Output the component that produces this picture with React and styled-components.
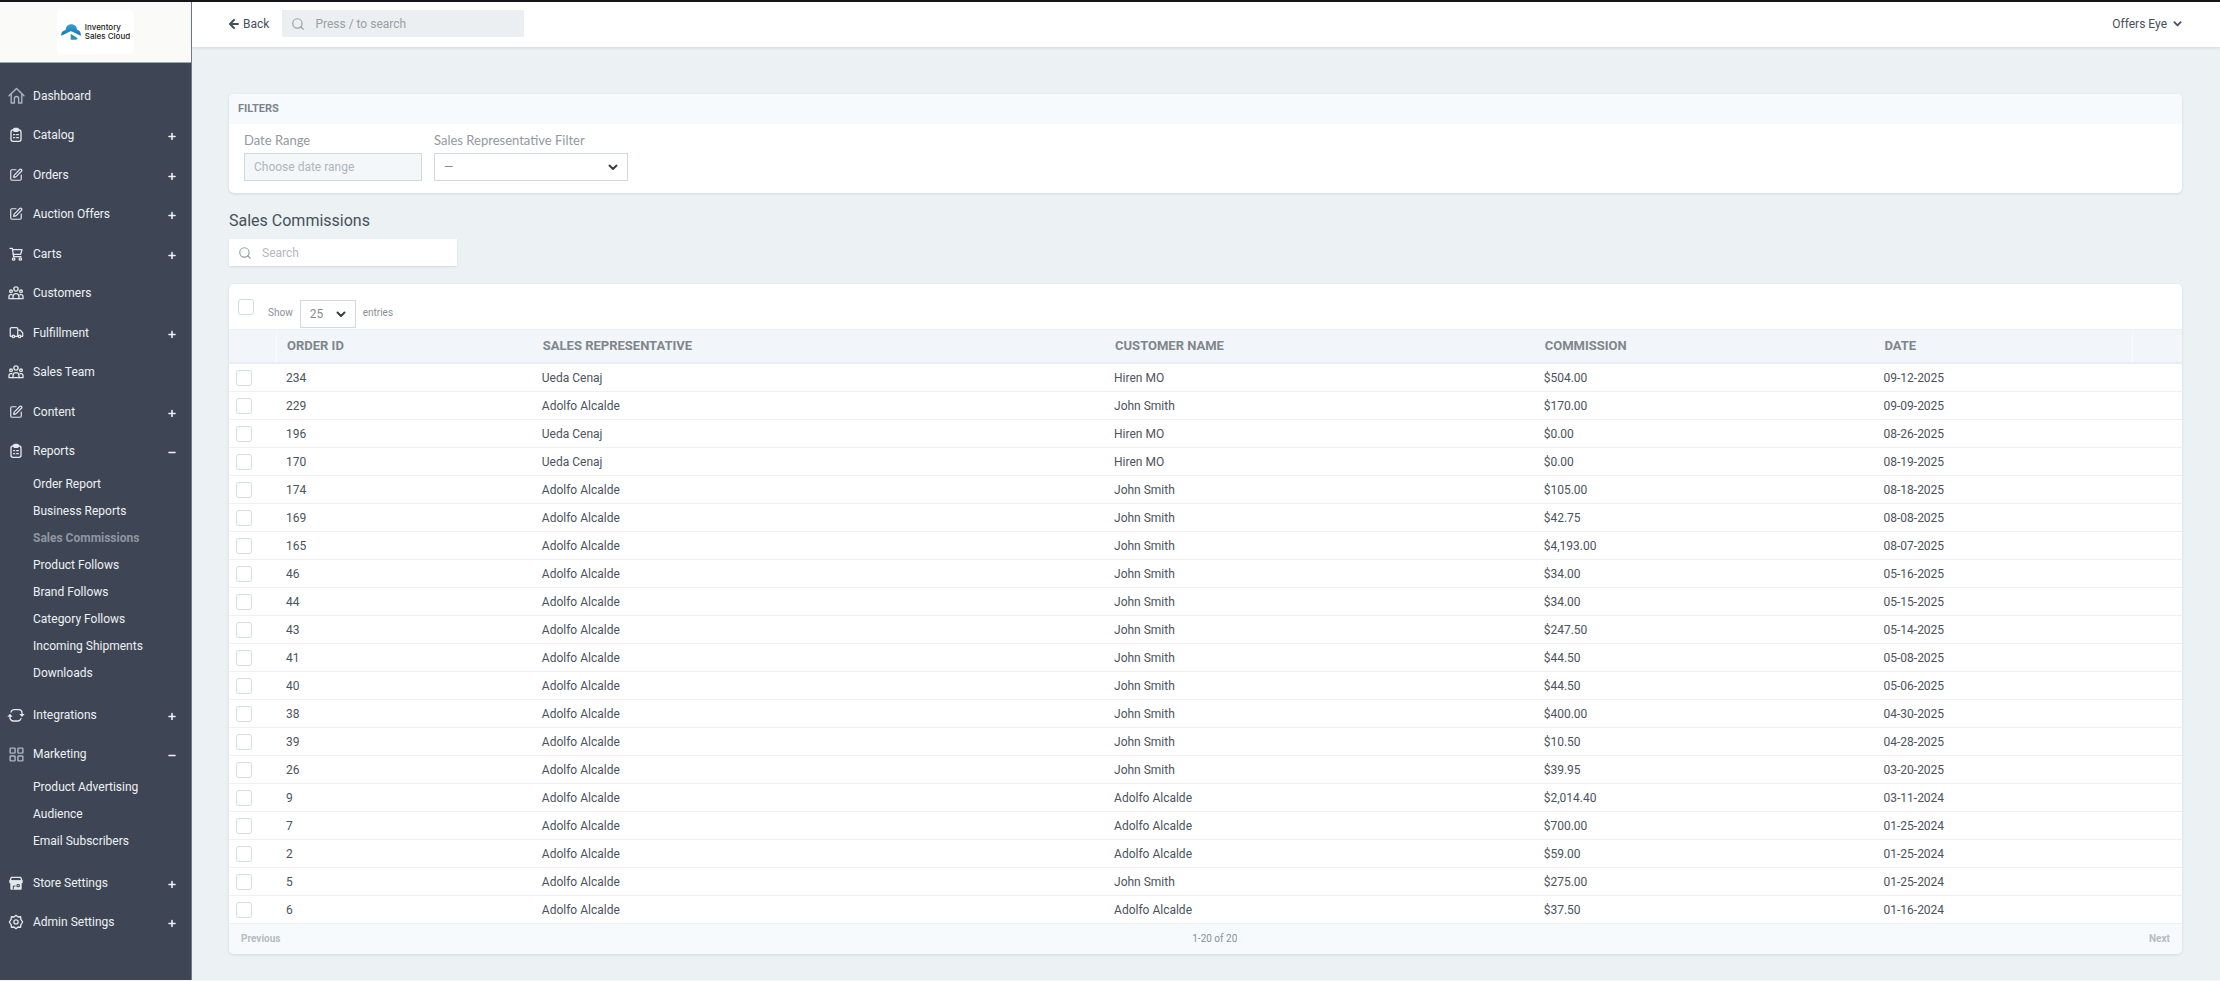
import React, { useState } from 'react';
import styled, { createGlobalStyle } from 'styled-components';
import { SquarePen, LayoutGrid, Search, Truck, ShoppingCart } from 'lucide-react';

const FONT = 'Roboto, "Liberation Sans", sans-serif';
const SIDEBAR = '#3e4655';
const PAGE_BG = '#ecf1f4';
const TEXT_DARK = '#46505c';
const TEXT_MUTED = '#8a9096';
const BORDER = '#d0dae0';

const GlobalStyle = createGlobalStyle`
  * {
    box-sizing: border-box;
  }
  body {
    margin: 0;
    background: #f1f6f9;
    color: ${TEXT_DARK};
    font-family: ${FONT};
    font-size: 12px;
  }
  input, select, button {
    font-family: ${FONT};
    font-size: 12px;
  }
`;

const Shell = styled.div`
  display: flex;
  height: calc(100vh - 1px);
  border-top: 2px solid #15151a;
  overflow: hidden;
`;

const Sidebar = styled.aside`
  flex: none;
  display: flex;
  flex-direction: column;
  width: 192px;
  background: ${SIDEBAR};
  border-right: 1px solid #707985;
`;

const Brand = styled.a`
  flex: none;
  display: flex;
  align-items: center;
  justify-content: center;
  height: 61px;
  background: #fafaf8;
  border-bottom: 1px solid #9aa9ae;
  text-decoration: none;
`;

const BrandCard = styled.span`
  display: flex;
  align-items: center;
  gap: 4px;
  padding: 0 4px;
  height: 44px;
  border-radius: 4px;
  background: #fff;
  color: #1b1d21;
  font-family: Inter, sans-serif;
  font-size: 8px;
  font-weight: 500;
  line-height: 9px;
`;

const NavList = styled.ul`
  margin: 0;
  padding: 13px 0 0;
  list-style: none;
`;

const NavGroup = styled.li`
  padding-bottom: ${p => (p.$open ? '8px' : '0')};
  &:nth-child(even) > button {
    height: 40px;
  }
`;

const NavButton = styled.button`
  display: flex;
  align-items: center;
  width: 100%;
  height: 39px;
  padding: 0 15px 0 8px;
  border: 0;
  background: none;
  color: #eef1f4;
  text-align: left;
  cursor: pointer;
`;

const NavIcon = styled.span`
  display: flex;
  align-items: center;
  justify-content: center;
  width: 16px;
  height: 18px;
  margin-right: 9px;
  color: ${p => (p.$soft ? '#a9b6c6' : '#e3e8ed')};
  svg {
    flex: none;
  }
`;

const NavText = styled.span`
  flex: 1;
`;

const SubList = styled.ul`
  margin: 0;
  padding: 0;
  list-style: none;
`;

const SubLink = styled.a`
  display: block;
  padding-left: 33px;
  line-height: 27px;
  text-decoration: none;
  color: ${p => (p.$active ? '#8f96a1' : '#eef1f4')};
  font-weight: ${p => (p.$active ? 700 : 400)};
`;

const Column = styled.div`
  flex: 1;
  min-width: 0;
  display: flex;
  flex-direction: column;
  background: ${PAGE_BG};
`;

const TopBar = styled.header`
  flex: none;
  display: flex;
  align-items: center;
  gap: 13px;
  height: 45px;
  padding: 0 38px 2px 37px;
  background: #fff;
  box-shadow: 0 1px 3px rgba(60, 80, 95, 0.16);
`;

const TextButton = styled.button`
  display: flex;
  align-items: center;
  gap: ${p => p.$gap || '4px'};
  padding: 0;
  border: 0;
  background: none;
  color: ${TEXT_DARK};
  cursor: pointer;
`;

const Spacer = styled.div`
  flex: 1;
`;

const SearchBox = styled.label`
  display: flex;
  align-items: center;
  gap: 10px;
  width: ${p => p.$width};
  height: 27px;
  padding: 0 9px;
  background: ${p => (p.$filled ? '#ebeff2' : '#fff')};
  color: #9a9fa5;
  box-shadow: ${p => (p.$filled ? 'none' : '0 1px 2px rgba(60, 80, 95, 0.12)')};
  input {
    flex: 1;
    min-width: 0;
    padding: 0;
    border: 0;
    outline: 0;
    background: none;
    color: ${TEXT_DARK};
  }
  input::placeholder {
    color: ${p => (p.$filled ? '#9a9fa5' : '#b4b8bc')};
  }
`;

const Content = styled.main`
  flex: 1;
  min-height: 0;
  overflow-y: auto;
  scrollbar-width: none;
  padding: 47px 38px 0 37px;
`;

const Card = styled.section`
  background: #fff;
  border-radius: 5px;
  box-shadow: 0 1px 3px rgba(60, 80, 95, 0.14);
  overflow: hidden;
`;

const CardTitle = styled.h2`
  margin: 0;
  padding: 0 9px;
  background: #f6fafd;
  color: #7c848b;
  font-size: 11px;
  font-weight: 700;
  line-height: 30px;
`;

const FilterRow = styled.div`
  display: flex;
  gap: 12px;
  padding: 8px 15px 12px;
`;

const Field = styled.div`
  display: flex;
  flex-direction: column;
  gap: 5px;
  width: ${p => p.$width};
  label {
    color: #93999f;
    font-family: Lato, sans-serif;
    font-size: 13px;
    line-height: 16px;
  }
`;

const DateInput = styled.input`
  width: 100%;
  height: 28px;
  padding: 0 9px;
  border: 1px solid ${BORDER};
  border-radius: 0;
  background: #f3f7fa;
  &::placeholder {
    color: #b0b6bb;
  }
`;

const SelectWrap = styled.span`
  position: relative;
  display: block;
  width: ${p => p.$width};
  svg {
    position: absolute;
    top: 9px;
    right: 10px;
    pointer-events: none;
    color: #3a3f45;
  }
`;

const SelectInput = styled.select`
  display: block;
  width: 100%;
  height: 28px;
  padding: 0 9px;
  appearance: none;
  border: 1px solid ${BORDER};
  border-radius: 0;
  background: #fff;
  color: #858b91;
`;

const PageTitle = styled.h1`
  margin: 18px 0 8px;
  font-size: 16px;
  font-weight: 400;
  line-height: 20px;
`;

const TableCard = styled(Card)`
  margin-top: 18px;
`;

const TableTools = styled.div`
  display: flex;
  align-items: flex-start;
  padding: 15px 9px 0;
  height: 45px;
`;

const Check = styled.input.attrs({ type: 'checkbox' })`
  display: block;
  appearance: none;
  width: 16px;
  height: 16px;
  margin: 0;
  border: 1px solid #d5dbdf;
  border-radius: 3px;
  background: #fff;
`;

const Entries = styled.label`
  display: flex;
  align-items: flex-start;
  gap: 7px;
  margin: 1px 0 0 14px;
  color: ${TEXT_MUTED};
  font-size: 10px;
  line-height: 26px;
`;

const Table = styled.table`
  width: 100%;
  table-layout: fixed;
  border-collapse: separate;
  border-spacing: 0;
  th {
    height: 35px;
    padding: 0 10px 2px;
    background: #f2f6fa;
    border-top: 1px solid #ecf1f4;
    border-bottom: 2px solid #e9edf0;
    color: #7f868c;
    font-size: 13px;
    font-weight: 700;
    text-align: left;
    text-transform: uppercase;
  }
  th:first-child {
    border-right: 1px solid #f7fafc;
  }
  th:last-child {
    border-left: 1px solid #f7fafc;
  }
  td {
    height: 28px;
    padding: 0 9px;
    border-bottom: 1px solid #edf1f2;
    color: #4b535c;
  }
  td:first-child {
    padding-left: 7px;
  }
`;

const Col = styled.col`
  width: ${p => p.$width};
`;

const Pager = styled.nav`
  display: flex;
  align-items: center;
  justify-content: space-between;
  height: 30px;
  padding: 0 12px 2px;
  background: #f6fafd;
  color: ${TEXT_MUTED};
  font-size: 10px;
`;

const PagerButton = styled.button`
  padding: 0;
  border: 0;
  background: none;
  color: #b6bcc0;
  && {
    font-size: 10px;
  }
  font-weight: 700;
`;

const Glyph = ({ size = 16, children, ...rest }) => (
  <svg
    width={size}
    height={size}
    viewBox="0 0 24 24"
    fill="none"
    stroke="currentColor"
    strokeWidth="2"
    strokeLinecap="round"
    strokeLinejoin="round"
    aria-hidden="true"
    {...rest}
  >
    {children}
  </svg>
);

const HomeIcon = () => (
  <Glyph size={17}>
    <path d="M1.500 12.500 12 2l10.500 10.500" />
    <path d="M4.500 10v12.500h4.500v-6a3 3 0 0 1 6 0v6h4.500V10" />
  </Glyph>
);

const ClipboardIcon = () => (
  <Glyph>
    <rect x="4.500" y="4.500" width="15" height="17" rx="3" />
    <rect x="8.500" y="2" width="7" height="4.500" rx="1.500" fill="currentColor" />
    <path d="M8.500 11.500h1.500M13 11.500h2.500M8.500 16h1.500M13 16h2.500" />
  </Glyph>
);

const CartIcon = () => (
  <Glyph>
    <path d="M3 3.500h3.500l2 12.500h11" />
    <path d="M6.800 5.500H21l-2 7H8" />
    <circle cx="8.500" cy="19.500" r="1.800" />
    <circle cx="18.500" cy="19.500" r="1.800" />
  </Glyph>
);

const PeopleIcon = () => (
  <Glyph>
    <circle cx="12" cy="6" r="3.200" />
    <circle cx="4.500" cy="9.500" r="2" />
    <circle cx="19.500" cy="9.500" r="2" />
    <path d="M7.500 20.500v-3a4.500 4.500 0 0 1 9 0v3z" />
    <path d="M6 14.500H4.500a3 3 0 0 0-3 3v3H7M18 14.500h1.500a3 3 0 0 1 3 3v3H17" />
  </Glyph>
);

const SyncIcon = () => (
  <svg
    width="18"
    height="16"
    viewBox="0 0 27 24"
    fill="none"
    stroke="currentColor"
    strokeWidth="2"
    strokeLinecap="round"
    aria-hidden="true"
  >
    <path d="M6 7.500A5 5 0 0 1 10.500 4h7A5 5 0 0 1 22.500 9v3" />
    <path d="M21 17.500a5 5 0 0 1-4.500 3.500h-7A5 5 0 0 1 4.500 16v-3" />
    <path d="M18.500 10.500h8l-4 4.500zM.500 14.500h8L4.500 10z" fill="currentColor" stroke="none" />
  </svg>
);

const StoreIcon = () => (
  <Glyph>
    <path d="M5 3.500h14l2 5.500H3z" />
    <path d="M3 9h18v2.500H3z" fill="currentColor" />
    <path d="M4.500 12v9h15v-9z" fill="currentColor" />
    <path d="M8 21v-4.500h2.500M14 14.500h3v3h-3z" stroke={SIDEBAR} strokeWidth="1.500" />
  </Glyph>
);

const GearIcon = () => (
  <Glyph>
    <path d="M12 2l3 2.500 3.900-.400.400 3.900L22 12l-2.700 4-.400 3.900-3.900-.400L12 22l-3-2.500-3.900.400-.400-3.900L2 12l2.700-4 .400-3.900 3.900.400z" />
    <circle cx="12" cy="12" r="3.200" />
  </Glyph>
);

const ToggleIcon = ({ open }) => (
  <svg width="8" height="10" viewBox="0 0 8 10" aria-hidden="true">
    <path
      d={open ? 'M1 6.500h6' : 'M1 6.500h6M4 3.500v6'}
      stroke="currentColor"
      strokeWidth="1.600"
      strokeLinecap="round"
    />
  </svg>
);

const Chevron = ({ size = 10 }) => (
  <svg width={size} height={size} viewBox="0 0 10 10" fill="none" aria-hidden="true">
    <path
      d="M1.500 3.500 5 7l3.500-3.500"
      stroke="currentColor"
      strokeWidth="2"
      strokeLinecap="round"
      strokeLinejoin="round"
    />
  </svg>
);

const BackArrow = () => (
  <svg width="10" height="10" viewBox="0 0 10 10" fill="none" aria-hidden="true">
    <path
      d="M9 5H1.500M5 1 1 5l4 4"
      stroke="currentColor"
      strokeWidth="2"
      strokeLinecap="round"
      strokeLinejoin="round"
    />
  </svg>
);

const CloudLogo = () => (
  <svg width="20" height="16" viewBox="0 0 60 48" aria-hidden="true">
    <defs>
      <linearGradient id="cloud" x1="0" y1="0" x2="0" y2="1">
        <stop offset="0" stopColor="#35a0d8" />
        <stop offset="1" stopColor="#1476b4" />
      </linearGradient>
    </defs>
    <path
      d="M1 35C-1 25 6 19 14 18 14 8 21 1 31 1s17 7 17 16c8 1 13 9 11 18L36 24q-6-4-12 0z"
      fill="url(#cloud)"
    />
    <path d="M29 29 50 43q-1 4-5 4H29z" fill="#2b93b8" />
  </svg>
);

const navItems = [
  { label: 'Dashboard', icon: <HomeIcon />, soft: true, leaf: true },
  { label: 'Catalog', icon: <ClipboardIcon /> },
  { label: 'Orders', icon: <SquarePen size={14} /> },
  { label: 'Auction Offers', icon: <SquarePen size={14} /> },
  { label: 'Carts', icon: <CartIcon /> },
  { label: 'Customers', icon: <PeopleIcon />, leaf: true },
  { label: 'Fulfillment', icon: <Truck size={15} /> },
  { label: 'Sales Team', icon: <PeopleIcon />, leaf: true },
  { label: 'Content', icon: <SquarePen size={14} /> },
  {
    label: 'Reports',
    icon: <ClipboardIcon />,
    children: [
      'Order Report',
      'Business Reports',
      'Sales Commissions',
      'Product Follows',
      'Brand Follows',
      'Category Follows',
      'Incoming Shipments',
      'Downloads',
    ],
  },
  { label: 'Integrations', icon: <SyncIcon /> },
  {
    label: 'Marketing',
    icon: <LayoutGrid size={17} />,
    soft: true,
    children: ['Product Advertising', 'Audience', 'Email Subscribers'],
  },
  { label: 'Store Settings', icon: <StoreIcon /> },
  { label: 'Admin Settings', icon: <GearIcon /> },
];

const ADOLFO = 'Adolfo Alcalde';
const UEDA = 'Ueda Cenaj';
const HIREN = 'Hiren MO';
const JOHN = 'John Smith';

const orders = [
  [234, UEDA, HIREN, '$504.00', '09-12-2025'],
  [229, ADOLFO, JOHN, '$170.00', '09-09-2025'],
  [196, UEDA, HIREN, '$0.00', '08-26-2025'],
  [170, UEDA, HIREN, '$0.00', '08-19-2025'],
  [174, ADOLFO, JOHN, '$105.00', '08-18-2025'],
  [169, ADOLFO, JOHN, '$42.75', '08-08-2025'],
  [165, ADOLFO, JOHN, '$4,193.00', '08-07-2025'],
  [46, ADOLFO, JOHN, '$34.00', '05-16-2025'],
  [44, ADOLFO, JOHN, '$34.00', '05-15-2025'],
  [43, ADOLFO, JOHN, '$247.50', '05-14-2025'],
  [41, ADOLFO, JOHN, '$44.50', '05-08-2025'],
  [40, ADOLFO, JOHN, '$44.50', '05-06-2025'],
  [38, ADOLFO, JOHN, '$400.00', '04-30-2025'],
  [39, ADOLFO, JOHN, '$10.50', '04-28-2025'],
  [26, ADOLFO, JOHN, '$39.95', '03-20-2025'],
  [9, ADOLFO, ADOLFO, '$2,014.40', '03-11-2024'],
  [7, ADOLFO, ADOLFO, '$700.00', '01-25-2024'],
  [2, ADOLFO, ADOLFO, '$59.00', '01-25-2024'],
  [5, ADOLFO, JOHN, '$275.00', '01-25-2024'],
  [6, ADOLFO, ADOLFO, '$37.50', '01-16-2024'],
];

const columns = [
  { title: 'Order ID', width: '13.1%' },
  { title: 'Sales Representative', width: '29.3%' },
  { title: 'Customer Name', width: '22%' },
  { title: 'Commission', width: '17.4%' },
  { title: 'Date', width: 'auto' },
];

function SideNav() {
  const [open, setOpen] = useState({ Reports: true, Marketing: true });
  const toggle = label => setOpen(prev => ({ ...prev, [label]: !prev[label] }));

  return (
    <Sidebar>
      <Brand href="#home">
        <BrandCard>
          <CloudLogo />
          <span>
            Inventory
            <br />
            Sales Cloud
          </span>
        </BrandCard>
      </Brand>
      <nav>
        <NavList>
          {navItems.map(({ label, icon, soft, leaf, children }) => {
            const expanded = Boolean(children && open[label]);
            return (
              <NavGroup key={label} $open={expanded}>
                <NavButton type="button" onClick={() => toggle(label)}>
                  <NavIcon $soft={soft}>{icon}</NavIcon>
                  <NavText>{label}</NavText>
                  {leaf ? null : <ToggleIcon open={expanded} />}
                </NavButton>
                {expanded ? (
                  <SubList>
                    {children.map(child => (
                      <li key={child}>
                        <SubLink href="#report" $active={child === 'Sales Commissions'}>
                          {child}
                        </SubLink>
                      </li>
                    ))}
                  </SubList>
                ) : null}
              </NavGroup>
            );
          })}
        </NavList>
      </nav>
    </Sidebar>
  );
}

function Filters() {
  return (
    <Card>
      <CardTitle>FILTERS</CardTitle>
      <FilterRow>
        <Field $width="178px">
          <label htmlFor="date-range">Date Range</label>
          <DateInput id="date-range" type="text" placeholder="Choose date range" />
        </Field>
        <Field $width="194px">
          <label htmlFor="sales-rep">Sales Representative Filter</label>
          <SelectWrap>
            <SelectInput id="sales-rep">
              <option>—</option>
            </SelectInput>
            <Chevron />
          </SelectWrap>
        </Field>
      </FilterRow>
    </Card>
  );
}

function Commissions() {
  return (
    <TableCard>
      <TableTools>
        <Check aria-label="Select all" />
        <Entries>
          Show
          <SelectWrap $width="56px">
            <SelectInput defaultValue="25">
              <option>25</option>
              <option>50</option>
            </SelectInput>
            <Chevron />
          </SelectWrap>
          entries
        </Entries>
      </TableTools>
      <Table>
        <colgroup>
          <Col $width="48px" />
          {columns.map(({ title, width }) => (
            <Col key={title} $width={width} />
          ))}
          <Col $width="50px" />
        </colgroup>
        <thead>
          <tr>
            <th aria-label="Select" />
            {columns.map(({ title }) => (
              <th key={title} scope="col">
                {title}
              </th>
            ))}
            <th aria-label="Actions" />
          </tr>
        </thead>
        <tbody>
          {orders.map(([id, ...cells]) => (
            <tr key={id}>
              <td>
                <Check aria-label={`Select order ${id}`} />
              </td>
              <td>{id}</td>
              {cells.map((cell, i) => (
                <td key={columns[i + 1].title}>{cell}</td>
              ))}
              <td />
            </tr>
          ))}
        </tbody>
      </Table>
      <Pager>
        <PagerButton type="button">Previous</PagerButton>
        <span>1-20 of 20</span>
        <PagerButton type="button">Next</PagerButton>
      </Pager>
    </TableCard>
  );
}

export default function App() {
  return (
    <>
      <GlobalStyle />
      <Shell>
        <SideNav />
        <Column>
          <TopBar>
            <TextButton type="button">
              <BackArrow />
              Back
            </TextButton>
            <SearchBox $width="242px" $filled>
              <Search size={14} />
              <input type="search" aria-label="Search everywhere" placeholder="Press / to search" />
            </SearchBox>
            <Spacer />
            <TextButton type="button" $gap="6px">
              Offers Eye
              <Chevron size={9} />
            </TextButton>
          </TopBar>
          <Content>
            <Filters />
            <PageTitle>Sales Commissions</PageTitle>
            <SearchBox $width="228px">
              <Search size={14} />
              <input type="search" aria-label="Search commissions" placeholder="Search" />
            </SearchBox>
            <Commissions />
          </Content>
        </Column>
      </Shell>
    </>
  );
}
